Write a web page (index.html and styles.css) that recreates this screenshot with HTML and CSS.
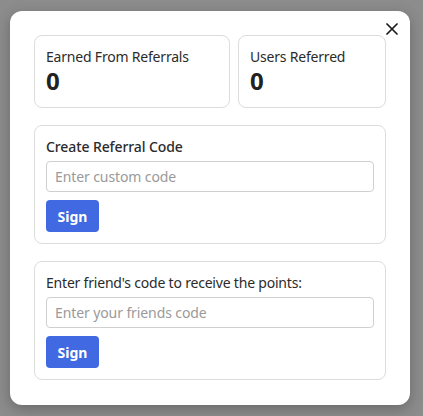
FILE: index.html
```html
<!DOCTYPE html>
<html>
<head>
<meta charset="utf-8">
<link rel="stylesheet" href="styles.css">
</head>
<body>
<div class="overlay">
  <div class="modal">
    <button class="close" aria-label="Close">
      <svg width="12" height="12" viewBox="0 0 12 12"><path d="M1 1L11 11M11 1L1 11" stroke="#1a1a1a" stroke-width="1.7" stroke-linecap="round"/></svg>
    </button>
    <div class="stats">
      <div class="card stat wide">
        <div class="label">Earned From Referrals</div>
        <div class="value">0</div>
      </div>
      <div class="card stat">
        <div class="label">Users Referred</div>
        <div class="value">0</div>
      </div>
    </div>
    <div class="card form">
      <div class="title">Create Referral Code</div>
      <input class="field" type="text" placeholder="Enter custom code">
      <button class="btn">Sign</button>
    </div>
    <div class="card form">
      <div class="label">Enter friend's code to receive the points:</div>
      <input class="field" type="text" placeholder="Enter your friends code">
      <button class="btn">Sign</button>
    </div>
  </div>
</div>
</body>
</html>
```
FILE: styles.css
```css
* { box-sizing: border-box; }
html, body { margin: 0; padding: 0; }
body {
  background: #8c8c8c;
  font-family: "Noto Sans", "Open Sans", sans-serif;
  color: #222;
  width: 423px;
  height: 416px;
  overflow: hidden;
}
.overlay {
  padding: 11px 0 0 10px;
}
.modal {
  position: relative;
  width: 400px;
  height: 394px;
  background: #fff;
  border-radius: 12px;
  box-shadow: 0 4px 14px rgba(0,0,0,0.25);
  padding: 24px;
  display: flex;
  flex-direction: column;
  gap: 17px;
}
.close {
  position: absolute;
  top: 12px;
  right: 12px;
  width: 12px;
  height: 12px;
  padding: 0;
  border: 0;
  background: none;
  display: flex;
  align-items: center;
  justify-content: center;
}
.stats {
  display: flex;
  gap: 8px;
}
.card {
  border: 1px solid #dcdcdc;
  border-radius: 8px;
  padding: 11px 11px;
}
.stat { flex: 0 0 148px; height: 73px; }
.stat.wide { flex: 0 0 196px; }
.label {
  font-size: 14px;
  line-height: 20px;
  letter-spacing: -0.2px;
  color: #2b2b2b;
}
.value {
  font-size: 24px;
  line-height: 28px;
  font-weight: 700;
  color: #222;
}
.form {
  display: flex;
  flex-direction: column;
  align-items: flex-start;
}
.title {
  font-size: 14px;
  line-height: 20px;
  font-weight: 500;
  letter-spacing: -0.1px;
  color: #2b2b2b;
}
.field {
  margin-top: 4px;
  width: 100%;
  height: 31px;
  border: 1px solid #cfcfcf;
  border-radius: 4px;
  padding: 0 8px;
  font-family: inherit;
  font-size: 14px;
  letter-spacing: -0.1px;
  color: #222;
  outline: none;
}
.field::placeholder { color: #9a9a9a; }
.btn {
  margin-top: 8px;
  width: 53px;
  height: 32px;
  border: 0;
  border-radius: 4px;
  background: #4169e1;
  color: #fff;
  font-family: inherit;
  font-size: 14px;
  font-weight: 700;
  padding: 0;
}
```
